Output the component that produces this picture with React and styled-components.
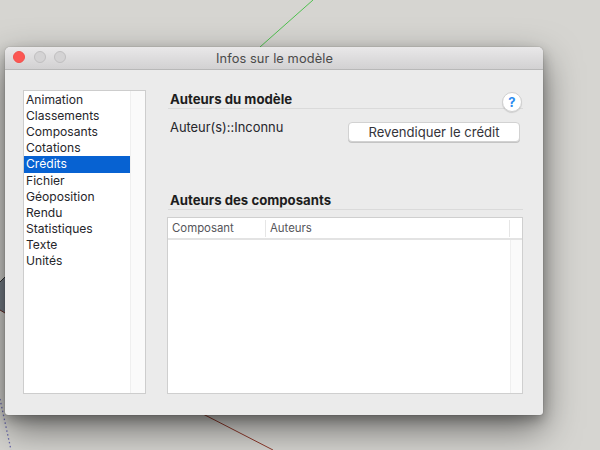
import React from "react";
import styled, { createGlobalStyle } from "styled-components";

const sections = [
  "Animation",
  "Classements",
  "Composants",
  "Cotations",
  "Crédits",
  "Fichier",
  "Géoposition",
  "Rendu",
  "Statistiques",
  "Texte",
  "Unités"
];

const GlobalStyle = createGlobalStyle`
  html, body {
    margin: 0;
    padding: 0;
    background: #d6d5d1;
    overflow: hidden;
  }
  * { box-sizing: border-box; }
`;

const Desktop = styled.div`
  position: relative;
  width: 600px;
  height: 450px;
  overflow: hidden;
  background: #d6d5d1;
  font-family: Inter, "Liberation Sans", sans-serif;
`;

const Scene = styled.svg`
  position: absolute;
  inset: 0;
`;

const Window = styled.div`
  position: absolute;
  left: 5px;
  top: 47px;
  width: 538px;
  height: 368px;
  display: flex;
  flex-direction: column;
  background: #ebebeb;
  border-radius: 5px 5px 3px 3px;
  box-shadow: 0 0 1px rgba(0, 0, 0, 0.5), 0 5px 12px rgba(0, 0, 0, 0.25),
    0 14px 36px rgba(0, 0, 0, 0.5);
`;

const TitleBar = styled.div`
  position: relative;
  flex: none;
  height: 23px;
  display: flex;
  align-items: center;
  justify-content: center;
  padding-left: 1px;
  background: linear-gradient(#e9e8e9, #d2d1d2);
  border-bottom: 1px solid #b8b8b8;
  border-radius: 5px 5px 0 0;
  font-size: 12.8px;
  letter-spacing: 0.1px;
  color: #4a4a4a;
`;

const Lights = styled.div`
  position: absolute;
  left: 8px;
  top: 4px;
  display: flex;
  gap: 8.5px;
`;

const Light = styled.span`
  width: 12px;
  height: 12px;
  border-radius: 50%;
  background: ${(p) => (p.$on ? "#fc5753" : "#d4d3d4")};
  border: 1px solid ${(p) => (p.$on ? "#f2504c" : "#c0bfc0")};
`;

const Body = styled.div`
  flex: 1;
  display: flex;
  gap: 22px;
  padding: 20px 20px 21px 18px;
`;

const SideList = styled.div`
  width: 123px;
  display: flex;
  background: #fff;
  border: 1px solid #cdcdcd;
`;

const Rows = styled.div`
  flex: 1;
  padding-top: 0.6px;
`;

const Row = styled.div`
  height: 16.2px;
  line-height: 16px;
  padding-left: 2px;
  font-size: 12.1px;
  color: ${(p) => (p.$active ? "#fff" : "#26262b")};
  background: ${(p) => (p.$active ? "#0762d2" : "transparent")};
`;

const Track = styled.div`
  flex: none;
  width: ${(p) => p.$width}px;
  background: #fafafa;
  border-left: 1px solid #efefef;
`;

const Main = styled.div`
  flex: 1;
  display: flex;
  flex-direction: column;
`;

const Heading = styled.div`
  height: 19px;
  line-height: 18px;
  padding-left: 2px;
  font-size: 13.2px;
  font-weight: 700;
  color: #1d1d20;
  border-bottom: 1px solid #dadada;
`;

const ModelSection = styled.div`
  position: relative;
  height: 101px;
`;

const HelpButton = styled.div`
  position: absolute;
  right: 1px;
  top: 2px;
  width: 20px;
  height: 20px;
  display: flex;
  align-items: center;
  justify-content: center;
  border-radius: 50%;
  background: #fff;
  border: 1px solid #d0d0d0;
  box-shadow: 0 1px 1px rgba(0, 0, 0, 0.12);
  font-size: 13px;
  font-weight: 700;
  color: #2e8cf0;
`;

const CreditRow = styled.div`
  display: flex;
  justify-content: space-between;
  align-items: flex-start;
  padding: 10px 3px 0 2px;
`;

const AuthorText = styled.div`
  font-size: 12.9px;
  line-height: 17px;
  color: #26262b;
`;

const CreditButton = styled.button`
  width: 172px;
  height: 20px;
  margin-top: 3px;
  padding: 0;
  background: #fff;
  border: 1px solid #d2d2d2;
  border-radius: 4px;
  box-shadow: 0 1px 0 #c4c4c4;
  font-family: inherit;
  font-size: 13.1px;
  color: #34343a;
`;

const TableBlock = styled.div`
  flex: 1;
  display: flex;
  flex-direction: column;
  gap: 7px;
`;

const Table = styled.div`
  flex: 1;
  margin-left: -1px;
  display: flex;
  flex-direction: column;
  background: #fff;
  border: 1px solid #cfcfcf;
`;

const TableHead = styled.div`
  flex: none;
  height: 22px;
  display: grid;
  grid-template-columns: 98px 1fr 12px;
  align-items: center;
  border-bottom: 2px solid #e3e3e3;
`;

const HeadCell = styled.div`
  height: 17px;
  line-height: 17px;
  padding-left: 4px;
  font-size: 11.4px;
  color: #55555a;
  border-right: ${(p) => (p.$last ? "none" : "1px solid #e6e6e6")};
`;

const TableBody = styled.div`
  flex: 1;
  display: flex;
  justify-content: flex-end;
`;

export default function App() {
  return (
    <Desktop>
      <GlobalStyle />
      <Scene width="600" height="450" viewBox="0 0 600 450">
        <line x1="260" y1="47" x2="313" y2="0" stroke="#4fc04f" strokeWidth="1" />
        <line x1="203" y1="414" x2="273" y2="450" stroke="#8f3a2c" strokeWidth="1" />
        <path d="M0 282 L5 277 V313 L0 310 Z" fill="#78808a" />
        <path d="M0 282 L5 277" stroke="#333" strokeWidth="1" />
        <path d="M0 310 L5 313" stroke="#6b3028" strokeWidth="1" />
        <line x1="0" y1="399" x2="11" y2="450" stroke="#6a6ab0" strokeWidth="1.3" strokeDasharray="1.5 2.5" />
      </Scene>
      <Window>
        <TitleBar>
          <Lights>
            <Light $on />
            <Light />
            <Light />
          </Lights>
          Infos sur le modèle
        </TitleBar>
        <Body>
          <SideList>
            <Rows>
              {sections.map((name) => (
                <Row key={name} $active={name === "Crédits"}>
                  {name}
                </Row>
              ))}
            </Rows>
            <Track $width={15} />
          </SideList>
          <Main>
            <ModelSection>
              <Heading>Auteurs du modèle</Heading>
              <HelpButton>?</HelpButton>
              <CreditRow>
                <AuthorText>Auteur(s)::Inconnu</AuthorText>
                <CreditButton>Revendiquer le crédit</CreditButton>
              </CreditRow>
            </ModelSection>
            <TableBlock>
              <Heading>Auteurs des composants</Heading>
              <Table>
                <TableHead>
                  <HeadCell>Composant</HeadCell>
                  <HeadCell>Auteurs</HeadCell>
                  <HeadCell $last />
                </TableHead>
                <TableBody>
                  <Track $width={12} />
                </TableBody>
              </Table>
            </TableBlock>
          </Main>
        </Body>
      </Window>
    </Desktop>
  );
}
